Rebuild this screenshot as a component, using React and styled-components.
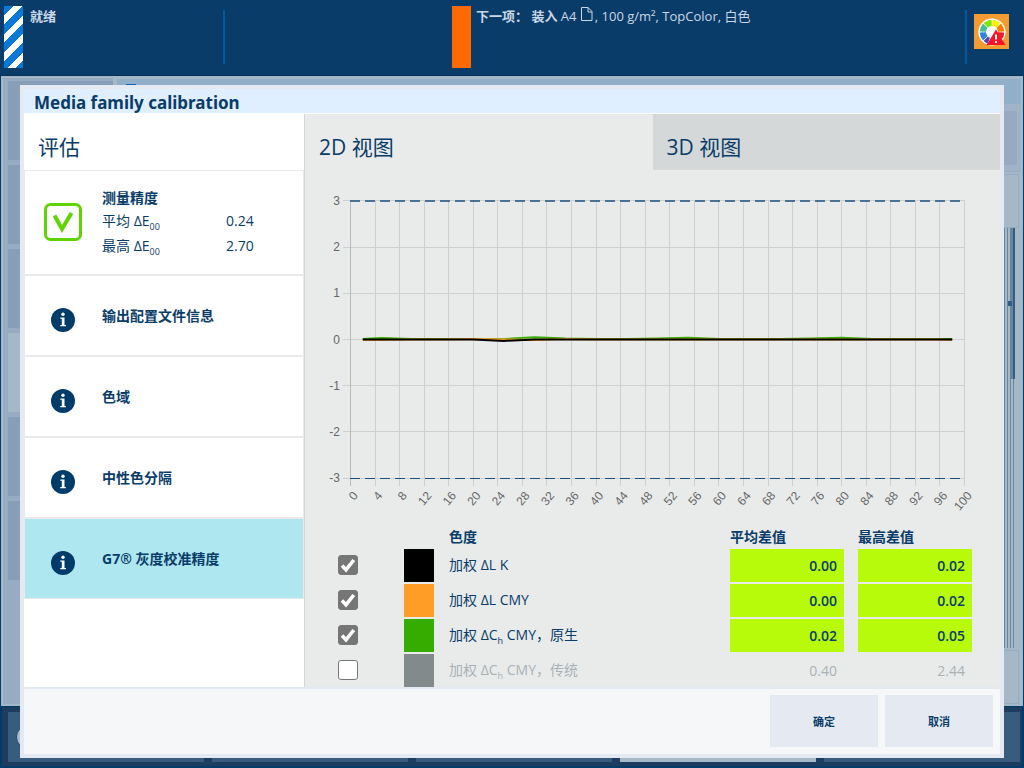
import React, { useState } from 'react';
import styled, { createGlobalStyle, css } from 'styled-components';

const GlobalStyle = createGlobalStyle`
  * {
    box-sizing: border-box;
  }

  body {
    margin: 0;
    background: #003c69;
    color: #0a3c69;
    font-family: 'Open Sans', 'Noto Sans CJK SC', sans-serif;
    font-size: 14px;
    line-height: 20px;
  }

  button {
    font-family: inherit;
    color: inherit;
    border: 0;
    padding: 0;
    cursor: pointer;
  }
`;

const Screen = styled.div`
  position: relative;
  display: flex;
  flex-direction: column;
  min-height: 100vh;
`;

/* status bar */

const StatusBar = styled.header`
  display: flex;
  flex: none;
  height: 76px;
  padding: 6px 15px 0 4px;
  background: #0a3c69;
  border-bottom: 1px solid #05305a;
  color: #c9d8e6;
`;

const StatusBlock = styled.div`
  display: flex;
  flex: ${props => props.$grow};
  gap: ${props => props.$gap};
`;

const StatusFlag = styled.div`
  width: 19px;
  height: 62px;
  background: #ff6a00;
  ${props => props.$striped && css`
    background: repeating-linear-gradient(135deg, #0a78d7 0 7px, #fff 7px 13px);
  `}
`;

const StatusText = styled.p`
  margin: 0;
  font-size: 13px;
  white-space: nowrap;

  svg {
    margin: 0 2px 0 1px;
  }
`;

const Divider = styled.div`
  flex: none;
  width: 2px;
  height: 54px;
  margin-top: 4px;
  background: #0458a0;
`;

const AlertButton = styled.button`
  display: flex;
  align-items: center;
  justify-content: center;
  width: 35px;
  height: 35px;
  margin: 8px 0 0 7px;
  background: #f49c32;
`;

/* page behind the dialog */

const Backdrop = styled.main`
  display: flex;
  flex: 1;
  gap: 4px;
  margin: 0 1px;
  padding: 2px;
  background: #a5b8c7;
`;

const BackNav = styled.div`
  display: flex;
  flex-direction: column;
  gap: 5px;
  width: 110px;
  padding: 3px 0 0 5px;
  background: #97acc2;
`;

const BackNavTile = styled.div`
  height: 79px;
  background: ${props => (props.$active ? '#a5b8c7' : '#869eb7')};
`;

const BackContent = styled.div`
  display: flex;
  flex: 1;
  flex-direction: column;
  align-items: flex-end;
  padding-top: 1px;
`;

const BackTitle = styled.div`
  width: 100%;
  height: 25px;
  padding: 5px 9px;
  background: #91afc8;

  &::before {
    content: '';
    display: block;
    width: 10px;
    height: 4px;
    background: #0a66b8;
  }
`;

const BackCard = styled.div`
  width: 100%;
  height: 68px;
  padding: 7px 4px 6px 0;
  background: #a1b4c7;
  border-bottom: 1px solid #97acc2;

  &::before {
    content: '';
    display: block;
    height: 54px;
    background: #96abc2;
  }
`;

const BackBox = styled.div`
  width: 100px;
  height: 54px;
  margin: 2px 2px 0 0;
  border: 1px solid #97acc2;
`;

const BackScroll = styled.div`
  display: flex;
  flex: 1;
  justify-content: flex-end;
  width: 100%;
  padding-right: 6px;
`;

const BackLines = styled.div`
  width: 11px;
  background: repeating-linear-gradient(90deg, #69869d 0 1px, #a5b8c7 1px 3px);
`;

const BackThumb = styled.div`
  display: flex;
  align-items: center;
  width: 4px;
  height: 151px;
  margin-left: -4px;
  background: linear-gradient(90deg, #69869d 0 2px, #355d84 2px 4px);

  &::before {
    content: '';
    width: 4px;
    height: 5px;
    margin-left: -3px;
    background: #355d84;
  }
`;

const BottomBar = styled.footer`
  display: grid;
  grid-template-columns: repeat(5, 1fr);
  flex: none;
  gap: 8px;
  height: 61px;
  margin: 1px 2px 0;
  padding: 5px 2px 4px 6px;
  background: #1e3c60;
  border-bottom: 2px solid #003c69;
`;

const BottomTile = styled.div`
  display: flex;
  align-items: center;
  padding-left: 8px;
  background: ${props => (props.$active ? '#a5b8c7' : '#385c7e')};
`;

const Disc = styled.span`
  width: 24px;
  height: 24px;
  border: 1px solid #24496c;
  border-radius: 50%;
  background: #a9bdd0;
`;

/* dialog */

const Dialog = styled.section`
  position: absolute;
  inset: 85px 20px 10px;
  display: flex;
  flex-direction: column;
  border: 4px solid #e5e9f1;
  background: #fff;
`;

const DialogTitle = styled.h1`
  flex: none;
  height: 24px;
  margin: 0 0 1px;
  padding-left: 10px;
  background: #dfefff;
  font-family: 'Noto Sans', sans-serif;
  font-size: 17px;
  font-weight: 700;
  line-height: 27px;
`;

const DialogBody = styled.div`
  display: flex;
  flex: 1;
`;

const DialogFooter = styled.div`
  display: flex;
  flex: none;
  justify-content: flex-end;
  gap: 7px;
  height: 67px;
  padding: 6px 7px;
  border-top: 2px solid #e3e9f1;
  background: #f6f7f9;
`;

const ActionButton = styled.button`
  width: 108px;
  height: 52px;
  background: #e5eaf2;
  font-size: 11px;
  font-weight: 700;
`;

const Sidebar = styled.nav`
  flex: none;
  width: 281px;
  border-right: 1px solid #d3d7d7;
`;

const SidebarTitle = styled.h2`
  height: 56px;
  margin: 0;
  padding: 11px 14px 0;
  font-size: 21px;
  font-weight: 400;
  line-height: 44px;
`;

const SidebarItem = styled.button`
  display: flex;
  width: 100%;
  height: ${props => (props.$tall ? '105px' : '81px')};
  padding: ${props => (props.$tall ? '17px 0 0' : '30px 0 0')};
  border: 1px solid #e9ebeb;
  background: ${props => (props.$active ? '#aee7f0' : '#fff')};
  font-size: 14px;
  line-height: 20px;
  text-align: left;
`;

const ItemIcon = styled.span`
  display: flex;
  justify-content: center;
  width: 76px;
  margin-right: 1px;
  padding-top: ${props => (props.$tall ? '15px' : '0')};
`;

const ItemTitle = styled.span`
  display: block;
  font-weight: 700;
`;

const Measure = styled.span`
  display: grid;
  grid-template-columns: 124px auto;
  height: 25px;
  line-height: 25px;
`;

const Sub = styled.sub`
  font-size: 9px;
  line-height: 0;
  vertical-align: -4px;
`;

const View = styled.div`
  display: flex;
  flex: 1;
  flex-direction: column;
  background: #e9ebeb;
`;

const Tabs = styled.div`
  display: grid;
  grid-template-columns: 1fr 1fr;
  flex: none;
  height: 56px;
`;

const Tab = styled.button`
  padding: 10px 14px 0;
  background: ${props => (props.$active ? '#e9ebeb' : '#d4d8d9')};
  font-size: 21px;
  line-height: 44px;
  text-align: left;
`;

const ChartSvg = styled.svg`
  display: block;
  flex: 1;
  width: 100%;
  height: auto;
  font-family: 'Liberation Sans', sans-serif;
  font-size: 12px;
`;

const Legend = styled.table`
  width: 100%;
  border-collapse: collapse;
  table-layout: fixed;
`;

const LegendHead = styled.th`
  width: ${props => props.$width};
  height: 22px;
  padding: 1px 0 0 ${props => props.$indent || '0'};
  font-weight: 700;
  line-height: 20px;
  text-align: left;
`;

const LegendCell = styled.td`
  height: 35px;
  padding: ${props => (props.$filled ? '2px' : '0')} 0 0 ${props => props.$indent || '0'};
  color: ${props => (props.$muted ? '#a9b1b5' : 'inherit')};

  label {
    display: block;
  }
`;

const Swatch = styled.div`
  height: 33px;
  background: ${props => props.$color};
`;

const Value = styled.div`
  width: 114px;
  height: 33px;
  padding-right: 7px;
  background: ${props => (props.$muted ? 'none' : '#b8fb0a')};
  font-weight: ${props => (props.$muted ? 400 : 600)};
  line-height: 34px;
  text-align: right;
`;

const Checkbox = styled.input`
  appearance: none;
  display: block;
  width: 20px;
  height: 20px;
  margin: 0;
  border: 1px solid #767676;
  border-radius: 3px;
  background: #fff;

  &:checked {
    background: #767676 url("data:image/svg+xml,%3Csvg xmlns='http://www.w3.org/2000/svg' viewBox='0 0 18 18'%3E%3Cpath d='M3 9.6l4 4.2L14.8 4' fill='none' stroke='white' stroke-width='3.6'/%3E%3C/svg%3E");
  }
`;

const PageIcon = () => (
  <svg width="12" height="14" viewBox="0 0 12 14" fill="none" stroke="currentColor">
    <path d="M.5.5H7l4 4v9H.5zM7 .5V5h4" />
  </svg>
);

const InfoIcon = () => (
  <svg width="24" height="26" viewBox="0 0 24 26">
    <circle cx="12" cy="14" r="12" fill="#003c69" />
    <circle cx="12" cy="8.3" r="1.7" fill="#fff" />
    <path d="M9.3 11.5h4.200v7.600h1.400v1.200H9.300v-1.200h1.500v-6.400H9.300z" fill="#fff" />
  </svg>
);

const PassIcon = () => (
  <svg width="38" height="38" viewBox="0 0 38 38" fill="none" stroke="#5fd400">
    <rect x="1.5" y="1.5" width="35" height="35" rx="5" strokeWidth="3" />
    <path d="M10.5 12.5L18 26l9.500-16" strokeWidth="4" />
  </svg>
);

const wheel = [
  { color: '#ffed00', from: 2, to: 43 },
  { color: '#ff7a00', from: 47, to: 88 },
  { color: '#f01c2c', from: 92, to: 133 },
  { color: '#5a3fb8', from: 200, to: 223 },
  { color: '#2a86dc', from: 227, to: 268 },
  { color: '#45bd98', from: 272, to: 313 },
  { color: '#7fe600', from: 317, to: 358 },
];

const point = (angle, radius) => {
  const rad = (angle * Math.PI) / 180;
  return `${15 + Math.sin(rad) * radius} ${15 - Math.cos(rad) * radius}`;
};

const WheelIcon = () => (
  <svg width="29" height="29" viewBox="0 0 29 29">
    <circle cx="15" cy="15" r="13.6" fill="#fff" />
    {wheel.map(({ color, from, to }) => (
      <path
        key={color}
        fill={color}
        d={`M${point(from, 6)}L${point(from, 12.3)}A12.3 12.3 0 0 1 ${point(to, 12.3)}L${point(to, 6)}A6 6 0 0 0 ${point(from, 6)}`}
      />
    ))}
    <path d="M19 12.5L28.5 28h-19z" fill="#fb1226" />
    <path d="M18 17.5h2v5h-2zM18 24h2v2h-2z" fill="#fff" />
  </svg>
);

const yTicks = [3, 2, 1, 0, -1, -2, -3];
const xTicks = Array.from({ length: 26 }, (_, i) => i * 4);

const xPos = value => 45.5 + value * 6.14;
const yPos = value => 169.5 - value * 46.17;

// measured tone values in percent
const tones = [2, 5, 10, 15, 20, 25, 30, 35, 40, 45, 50, 55, 60, 65, 70, 75, 80, 85, 90, 95, 98];

const series = [
  { id: 'native', color: '#35ad00', values: [0.01, 0.03, 0.01, 0.01, 0.01, 0.01, 0.05, 0.02, 0.01, 0.01, 0.02, 0.04, 0.01, 0.01, 0.01, 0.02, 0.04, 0.01, 0.01, 0.01, 0.01] },
  { id: 'lcmy', color: '#ff9d27', values: [-0.01, -0.01, 0, 0, 0.01, 0, -0.01, 0.01, 0, 0, 0, 0, 0, 0, 0, 0, 0, 0, 0, 0, -0.01] },
  { id: 'lk', color: '#000', values: [0, 0, 0, 0, 0, -0.03, 0, 0, 0, 0, 0, 0, 0, 0, 0, 0, 0, 0, 0, 0, 0] },
];

const toPoints = values => values.map((value, i) => `${xPos(tones[i])},${yPos(value)}`).join(' ');

const Chart = ({ shown }) => (
  <ChartSvg viewBox="0 0 695 355" role="img" aria-label="2D 视图">
    <g stroke="#ced0d0" shapeRendering="crispEdges">
      {yTicks.map(tick => (
        <line key={tick} x1="38" x2="660" y1={yPos(tick)} y2={yPos(tick)} />
      ))}
      {xTicks.map(tick => (
        <line key={tick} x1={xPos(tick)} x2={xPos(tick)} y1="31" y2="316" stroke={tick ? '#ced0d0' : '#b9bbbb'} />
      ))}
    </g>
    <g stroke="#1e4f80" strokeDasharray="10 5">
      <line x1="45" x2="660" y1="31" y2="31" strokeWidth="1.5" />
      <line x1="45" x2="660" y1="308.5" y2="308.5" />
    </g>
    <g fill="none" strokeWidth="2">
      {series.filter(({ id }) => shown[id]).map(({ id, color, values }) => (
        <polyline key={id} stroke={color} points={toPoints(values)} />
      ))}
    </g>
    <g fill="#666" textAnchor="end">
      {yTicks.map(tick => (
        <text key={tick} x="35" y={yPos(tick) + 4}>{tick}</text>
      ))}
      {xTicks.map(tick => (
        <text key={tick} transform={`translate(${xPos(tick) + 8} 326) rotate(-50)`}>{tick}</text>
      ))}
    </g>
  </ChartSvg>
);

const checks = [
  { id: 'profile', title: '输出配置文件信息' },
  { id: 'gamut', title: '色域' },
  { id: 'neutral', title: '中性色分隔' },
  { id: 'g7', title: 'G7® 灰度校准精度' },
];

const rows = [
  { id: 'lk', color: '#000', label: '加权 ΔL K', avg: '0.00', max: '0.02' },
  { id: 'lcmy', color: '#ff9d27', label: '加权 ΔL CMY', avg: '0.00', max: '0.02' },
  { id: 'native', color: '#35ad00', label: <>加权 ΔC<Sub>h</Sub> CMY，原生</>, avg: '0.02', max: '0.05' },
  { id: 'legacy', color: '#828a8c', label: <>加权 ΔC<Sub>h</Sub> CMY，传统</>, avg: '0.40', max: '2.44' },
];

const App = () => {
  const [selected, setSelected] = useState('g7');
  const [tab, setTab] = useState('2d');
  const [shown, setShown] = useState({ lk: true, lcmy: true, native: true, legacy: false });

  const toggle = id => setShown({ ...shown, [id]: !shown[id] });

  return (
    <Screen>
      <GlobalStyle />
      <StatusBar>
        <StatusBlock $grow="0 0 219px" $gap="7px">
          <StatusFlag $striped />
          <StatusText><b>就绪</b></StatusText>
        </StatusBlock>
        <Divider />
        <StatusBlock $grow="0 0 227px" />
        <StatusBlock $grow="1" $gap="5px">
          <StatusFlag />
          <StatusText>
            <b>下一项： 装入</b> A4 <PageIcon />, 100 g/m², TopColor, 白色
          </StatusText>
        </StatusBlock>
        <Divider />
        <AlertButton aria-label="校准"><WheelIcon /></AlertButton>
      </StatusBar>

      <Backdrop>
        <BackNav>
          <BackNavTile />
          <BackNavTile />
          <BackNavTile />
          <BackNavTile $active />
          <BackNavTile />
          <BackNavTile />
        </BackNav>
        <BackContent>
          <BackTitle />
          <BackCard />
          <BackBox />
          <BackScroll>
            <BackLines />
            <BackThumb />
          </BackScroll>
          <BackBox />
        </BackContent>
      </Backdrop>
      <BottomBar>
        <BottomTile><Disc /></BottomTile>
        <BottomTile />
        <BottomTile />
        <BottomTile $active />
        <BottomTile />
      </BottomBar>

      <Dialog role="dialog" aria-labelledby="dialog-title">
        <DialogTitle id="dialog-title">Media family calibration</DialogTitle>
        <DialogBody>
          <Sidebar>
            <SidebarTitle>评估</SidebarTitle>
            <SidebarItem $tall $active={selected === 'accuracy'} onClick={() => setSelected('accuracy')}>
              <ItemIcon $tall><PassIcon /></ItemIcon>
              <span>
                <ItemTitle>测量精度</ItemTitle>
                <Measure><span>平均 ΔE<Sub>00</Sub></span><span>0.24</span></Measure>
                <Measure><span>最高 ΔE<Sub>00</Sub></span><span>2.70</span></Measure>
              </span>
            </SidebarItem>
            {checks.map(({ id, title }) => (
              <SidebarItem key={id} $active={selected === id} onClick={() => setSelected(id)}>
                <ItemIcon><InfoIcon /></ItemIcon>
                <ItemTitle>{title}</ItemTitle>
              </SidebarItem>
            ))}
          </Sidebar>
          <View>
            <Tabs>
              <Tab $active={tab === '2d'} onClick={() => setTab('2d')}>2D 视图</Tab>
              <Tab $active={tab === '3d'} onClick={() => setTab('3d')}>3D 视图</Tab>
            </Tabs>
            <Chart shown={shown} />
            <Legend>
              <thead>
                <tr>
                  <LegendHead $width="99px" />
                  <LegendHead $width="30px" />
                  <LegendHead $indent="15px">色度</LegendHead>
                  <LegendHead $width="128px">平均差值</LegendHead>
                  <LegendHead $width="142px">最高差值</LegendHead>
                </tr>
              </thead>
              <tbody>
                {rows.map(({ id, color, label, avg, max }) => (
                  <tr key={id}>
                    <LegendCell $indent="33px">
                      <Checkbox type="checkbox" id={id} checked={shown[id]} onChange={() => toggle(id)} />
                    </LegendCell>
                    <LegendCell $filled><Swatch $color={color} /></LegendCell>
                    <LegendCell $indent="15px" $muted={!shown[id]}><label htmlFor={id}>{label}</label></LegendCell>
                    <LegendCell $filled $muted={!shown[id]}><Value $muted={!shown[id]}>{avg}</Value></LegendCell>
                    <LegendCell $filled $muted={!shown[id]}><Value $muted={!shown[id]}>{max}</Value></LegendCell>
                  </tr>
                ))}
              </tbody>
            </Legend>
          </View>
        </DialogBody>
        <DialogFooter>
          <ActionButton>确定</ActionButton>
          <ActionButton>取消</ActionButton>
        </DialogFooter>
      </Dialog>
    </Screen>
  );
};

export default App;
